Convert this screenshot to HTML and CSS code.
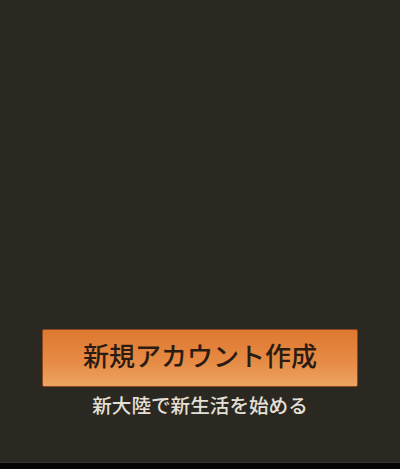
FILE: index.html
```html
<!DOCTYPE html>
<html lang="ja">
<head>
<meta charset="utf-8">
<link rel="stylesheet" href="styles.css">
</head>
<body>
<div class="screen">
  <div class="main">
    <button class="cta">新規アカウント作成</button>
    <p class="sub">新大陸で新生活を始める</p>
  </div>
  <div class="bar"></div>
</div>
</body>
</html>
```
FILE: styles.css
```css
html, body {
  margin: 0;
  padding: 0;
  background: #2b2822;
}
.screen {
  width: 400px;
  height: 469px;
  display: flex;
  flex-direction: column;
  font-family: "Noto Sans CJK JP", "Noto Sans", sans-serif;
}
.main {
  flex: 1;
  display: flex;
  flex-direction: column;
  align-items: center;
  padding-top: 329px;
  box-sizing: border-box;
}
.cta {
  width: 316px;
  height: 58px;
  margin: 0;
  padding: 0 0 6px 0;
  box-sizing: border-box;
  border: 1px solid #8a4a1e;
  border-radius: 2px;
  background: linear-gradient(to bottom, #df7830 0%, #e68a44 55%, #eda462 100%);
  color: #2a1c12;
  font-family: inherit;
  font-size: 26px;
  font-weight: 500;
  line-height: 1;
  display: flex;
  align-items: center;
  justify-content: center;
}
.sub {
  margin: 8px 0 0 0;
  font-size: 19.6px;
  font-weight: 500;
  line-height: 1;
  color: #e4e0d8;
}
.bar {
  height: 7px;
  background: #050505;
  border-top: 1px solid #3a3832;
  box-sizing: border-box;
}
```
